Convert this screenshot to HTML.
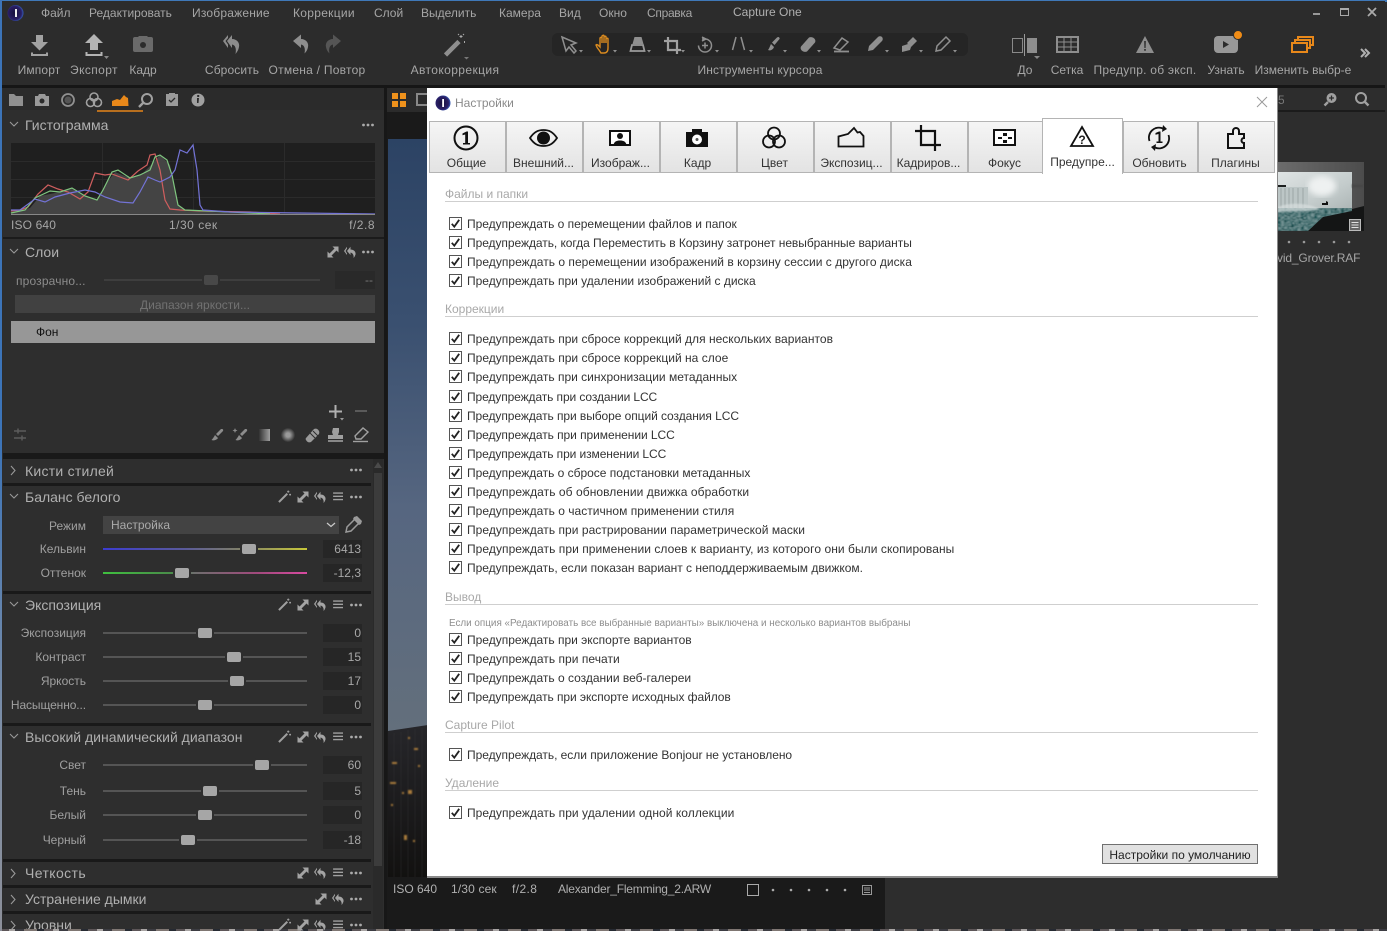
<!DOCTYPE html>
<html lang="ru"><head><meta charset="utf-8"><title>Capture One</title>
<style>
*{box-sizing:border-box}
html,body{margin:0;padding:0;width:1387px;height:931px;overflow:hidden;background:#2d2d2d}
body{position:relative;font:12px/16px "Liberation Sans","Noto Sans CJK SC",sans-serif;color:#a6a6a6}
.a{position:absolute}
.t{position:absolute;white-space:nowrap;line-height:16px;height:16px}
.c{transform:translateX(-50%)}
.h{position:absolute;white-space:nowrap;left:25px;font-size:14px;line-height:18px;height:18px;color:#b0b0b0}
.l{position:absolute;left:0;width:86px;text-align:right;white-space:nowrap;line-height:16px;height:16px;color:#a0a0a0}
.v{position:absolute;left:323px;width:39px;height:18px;background:#262626;text-align:right;padding-right:1px;line-height:18px;color:#a8a8a8}
.s{position:absolute;left:103px;width:204px;height:2px;background:#555}
.k{position:absolute;width:14px;height:10px;background:#a6a6a6;border-radius:2px;box-shadow:0 0 0 2px #2e2e2e}
.b{position:absolute;left:3px;width:368px;height:3px;background:#191919}
#dlg{position:absolute;left:427px;top:88px;width:851px;height:790px;background:#fff;border-right:1px solid #8a8a8a;border-bottom:2px solid #8a8a8a;color:#333}
.tab{position:absolute;top:33px;height:52px;background:linear-gradient(#f5f5f5,#e3e3e3);border:1px solid #b4b4b4;text-align:center;font-size:12px;line-height:16px;padding:33px 2px 0 0;color:#333;white-space:nowrap}
.sec{position:absolute;left:18px;width:813px;border-bottom:1px solid #cfcfcf;color:#a8a8a8;line-height:14px;height:15px}
.r{position:absolute;left:22px;height:16px;line-height:16px;white-space:nowrap;color:#333;padding-left:18px}
.r svg{position:absolute;left:0;top:1px;width:13px;height:13px}
</style></head>
<body>
<svg width="0" height="0" style="position:absolute"><defs>
<symbol id="wand" viewBox="0 0 14 14" overflow="visible"><path d="M1 13L10 4" stroke="#a0a0a0" stroke-width="2.200" fill="none"/><path d="M11 .5v2.500M9.800 1.800h2.500M13 4v2M12 5h2" stroke="#a8a8a8" stroke-width="1" fill="none"/></symbol>
<symbol id="exp" viewBox="0 0 12 12" overflow="visible"><path d="M5.500 .5H11.500V6.500L9.500 4.500 4.500 9.500 6.500 11.500H.5V5.500L2.500 7.500 7.500 2.500z" fill="#a4a4a4"/></symbol>
<symbol id="und" viewBox="0 0 12 12" overflow="visible"><path d="M3 5L6.500 .8V3.500C10 3.500 12 6 11.500 8.500 11 10 10.500 11 9.500 12 10 9.500 9 7 6.500 6.500V9ZM0 5L3 .8V2.500L1.500 5 3 7.500V9Z" fill="#a4a4a4"/></symbol>
<symbol id="lst" viewBox="0 0 12 10" overflow="visible"><path d="M0 1.200h11M0 4.800h11M0 8.400h11" stroke="#a0a0a0" stroke-width="1.500"/></symbol>
<symbol id="dot" viewBox="0 0 12 4" overflow="visible"><circle cx="1.500" cy="2" r="1.400" fill="#aaa"/><circle cx="6" cy="2" r="1.400" fill="#aaa"/><circle cx="10.500" cy="2" r="1.400" fill="#aaa"/></symbol>
<symbol id="c" viewBox="0 0 13 13"><rect x=".5" y=".5" width="12" height="12" fill="#fff" stroke="#555"/><path d="M2.800 6.800L5.300 9.700 10.200 2.800" fill="none" stroke="#222" stroke-width="1.800"/></symbol>
<filter id="nz" x="0" y="0" width="1" height="1"><feTurbulence type="fractalNoise" baseFrequency=".3 .7" numOctaves="2" seed="4"/><feColorMatrix values="1.300 0 0 0 -.45  1.300 0 0 0 -.3  1.300 0 0 0 -.3  0 0 0 0 1"/><feGaussianBlur stdDeviation=".4"/></filter>
<filter id="bl"><feGaussianBlur stdDeviation="3"/></filter>
<filter id="bs"><feGaussianBlur stdDeviation=".7"/></filter>
</defs></svg>

<!-- frame -->
<div class="a" style="left:0;top:0;width:1387px;height:2px;background:#3f78b8"></div>
<div class="a" style="left:0;top:0;width:2px;height:931px;background:#3c74b8"></div>
<div class="a" style="left:2px;top:1px;width:1383px;height:85px;background:#2c2c2c"></div>
<div class="a" style="left:2px;top:85px;width:1383px;height:3px;background:#161616"></div>
<div class="a" style="left:552px;top:33px;width:416px;height:23px;background:#252525;border-radius:6px"></div>
<div class="a" style="left:3px;top:88px;width:381px;height:841px;background:#2e2e2e"></div>
<div class="a" style="left:3px;top:88px;width:381px;height:22px;background:#2b2b2b"></div>
<div class="a" style="left:97px;top:110px;width:46px;height:2px;background:#b86f1e"></div>
<div class="a" style="left:384px;top:88px;width:3px;height:841px;background:#171717"></div>
<div class="a" style="left:387px;top:88px;width:498px;height:24px;background:#2b2b2b"></div>
<div class="a" style="left:387px;top:112px;width:498px;height:817px;background:#1a1a1a"></div>
<div class="a" style="left:885px;top:88px;width:500px;height:841px;background:#2d2d2d"></div>
<div class="a" style="left:1277px;top:110px;width:108px;height:2px;background:#1b1b1b"></div>
<div class="a" style="left:388px;top:139px;width:40px;height:738px;background:linear-gradient(#2c4364 0,#3a5070 25%,#566680 50%,#636f7c 80%,#56626b 100%)"></div>
<div class="a" style="left:0;top:929px;width:1387px;height:2px;background:repeating-linear-gradient(90deg,#5d5658 0 9px,#a9a5a4 9px 15px,#3c3c42 15px 24px,#7f7672 24px 37px,#262a32 37px 44px)"></div>
<div class="a" style="left:0;top:440px;width:2px;height:491px;background:linear-gradient(#3c74b8,#7f8fa6 60%,#8c8f99)"></div>

<!-- building in viewer -->
<svg class="a" style="left:388px;top:725px" width="40" height="152">
<defs><linearGradient id="bg" x1="0" y1="0" x2="0" y2="1"><stop offset="0" stop-color="#26262a"/><stop offset="1" stop-color="#121110"/></linearGradient></defs>
<path d="M0 6L20 3 40 0V152H0z" fill="url(#bg)"/>
<path d="M6 8V152M13 7V152M20 5V152M27 4V152M34 3V152" stroke="#38383a" stroke-width="1" opacity=".3"/>
<g fill="#a87a3a" filter="url(#bs)"><rect x="20" y="12" width="2" height="2"/><rect x="26" y="23" width="4" height="2"/><rect x="4" y="37" width="5" height="2"/><rect x="2" y="57" width="6" height="2"/><rect x="20" y="65" width="4" height="4"/><rect x="14" y="67" width="2" height="2"/><rect x="3" y="79" width="2" height="2"/><rect x="16" y="110" width="3" height="5"/><rect x="25" y="115" width="2" height="2"/><rect x="30" y="40" width="2" height="2"/></g>
</svg>

<!-- thumbnail -->
<svg class="a" style="left:1278px;top:162px" width="86" height="69">
<defs><linearGradient id="fr" x1="0" y1="0" x2="1" y2="0"><stop offset="0" stop-color="#6c6c6c"/><stop offset="1" stop-color="#4c4c4c"/></linearGradient><linearGradient id="sk" x1="0" y1="0" x2="1" y2="1"><stop offset="0" stop-color="#dfe4e4"/><stop offset=".6" stop-color="#c4cccc"/><stop offset="1" stop-color="#aab3b3"/></linearGradient></defs>
<rect width="86" height="69" fill="url(#fr)"/>
<rect x="0" y="10" width="74" height="40" fill="url(#sk)"/>
<ellipse cx="44" cy="24" rx="14" ry="10" fill="#eef1f1" filter="url(#bl)"/>
<rect x="74" y="22" width="12" height="4" fill="#484848" filter="url(#bs)"/>
<rect x="0" y="25" width="30" height="22" fill="#bcc6c6"/>
<path d="M3 26v20M7 26v20M11 26v20M15 26v20M20 26v20M25 26v20" stroke="#8f9a9a" opacity=".7"/>
<path d="M0 23h8v2H0z" fill="#1c1f1f"/>
<rect x="0" y="46" width="74" height="23" filter="url(#nz)"/>
<rect x="0" y="46" width="74" height="23" fill="#163e42" opacity=".4"/>
<path d="M0 45C12 40 30 41 42 47 30 50 12 49 0 50z" fill="#d8dfdf" opacity=".7" filter="url(#bs)"/>
<path d="M45 55L74 49V47L86 44V69H30z" fill="#141515"/>
<path d="M44 41h4v-2l2 1v3h-6z" fill="#111"/>
<rect x="71.500" y="57.500" width="11" height="11" fill="#666" stroke="#bbb"/><path d="M73.500 60.500h7M73.500 63h7M73.500 65.500h7" stroke="#e0e0e0"/>
</svg>

<!-- menu -->
<span class="t" style="left:41px;top:5px">Файл</span>
<span class="t" style="left:89px;top:5px">Редактировать</span>
<span class="t" style="left:192px;top:5px;letter-spacing:.2px">Изображение</span>
<span class="t" style="left:293px;top:5px;letter-spacing:.3px">Коррекции</span>
<span class="t" style="left:374px;top:5px">Слой</span>
<span class="t" style="left:421px;top:5px">Выделить</span>
<span class="t" style="left:499px;top:5px">Камера</span>
<span class="t" style="left:559px;top:5px">Вид</span>
<span class="t" style="left:599px;top:5px">Окно</span>
<span class="t" style="left:647px;top:5px;letter-spacing:-.3px">Справка</span>
<span class="t" style="left:733px;top:4px;color:#b0b0b0">Capture One</span>

<!-- toolbar labels -->
<span class="t c" style="left:39px;top:62px;letter-spacing:.15px">Импорт</span>
<span class="t c" style="left:94px;top:62px;letter-spacing:.4px">Экспорт</span>
<span class="t c" style="left:143px;top:62px">Кадр</span>
<span class="t c" style="left:232px;top:62px;letter-spacing:.1px">Сбросить</span>
<span class="t c" style="left:317px;top:62px;letter-spacing:.25px">Отмена / Повтор</span>
<span class="t c" style="left:455px;top:62px;letter-spacing:.4px">Автокоррекция</span>
<span class="t c" style="left:760px;top:62px;letter-spacing:.15px">Инструменты курсора</span>
<span class="t c" style="left:1025px;top:62px">До</span>
<span class="t c" style="left:1067px;top:62px">Сетка</span>
<span class="t c" style="left:1145px;top:62px;letter-spacing:.25px">Предупр. об эксп.</span>
<span class="t c" style="left:1226px;top:62px">Узнать</span>
<span class="t c" style="left:1303px;top:62px">Изменить выбр-е</span>

<!-- icons under dialog -->
<svg class="a" style="left:0;top:0" width="1387" height="931">
<defs><radialGradient id="lg" cx=".45" cy=".5" r=".6"><stop offset="0" stop-color="#16103a"/><stop offset=".7" stop-color="#2a1f66"/><stop offset="1" stop-color="#3a76d8"/></radialGradient></defs>
<circle cx="15.500" cy="13" r="8" fill="url(#lg)"/><path d="M15 9h2v8h-2z" fill="#eee"/>
<!-- import -->
<path d="M36 35h7v7h5l-8.500 8.500L31 42h5z" fill="#a2a2a2"/><path d="M32 52.500v2.500h15v-2.500" fill="none" stroke="#a2a2a2" stroke-width="2"/>
<!-- export -->
<path d="M94 34l9 9h-5v7h-8v-7h-5z" fill="#b4b4b4"/><path d="M86.500 52v3h15v-3" fill="none" stroke="#b4b4b4" stroke-width="2"/><path d="M104 56h5l-2.500 3z" fill="#888"/>
<!-- camera -->
<path d="M133 39a2 2 0 0 1 2-2h3l1-1h8l1 1h3a2 2 0 0 1 2 2v11a2 2 0 0 1-2 2h-16a2 2 0 0 1-2-2z" fill="#6a6a6a"/><circle cx="143" cy="45" r="3" fill="#2c2c2c"/>
<!-- reset -->
<path d="M227 41L232 35V39C237 39 240 43 239 47 238.500 50 237 52 235.500 54 236.500 49 235.500 45 232 44.500V48ZM223 41L228 35V38L225.500 41 228 44.500V48Z" fill="#8c8c8c"/>
<!-- undo / redo -->
<path d="M293 41L301 34.500V39C306 39 309 43 308 47 307.500 50 306 52 304.500 53.500 305.500 49 304.500 45 301 44.500V48Z" fill="#8e8e8e"/>
<path d="M341 41L333 34.500V39C328 39 325 43 326 47 326.500 50 328 52 329.500 53.500 328.500 49 329.500 45 333 44.500V48Z" fill="#555"/>
<!-- wand -->
<path d="M445.500 55L459 41.500" stroke="#8f8f8f" stroke-width="4.500"/><path d="M461 35v3M459.500 36.500h3M458 34l1 1M464 34l-1 1M464.500 41v2" stroke="#aaa" stroke-width="1"/><path d="M464 57h5l-2.500 2.500z" fill="#777"/>
<!-- cursor tools -->
<g fill="none" stroke="#8f8f8f" stroke-width="1.800">
<path d="M562 37l14 6-5 2 5 6-2 2-5-6-3 4z" stroke-width="1.500"/>
<path d="M599 50c-2-2-3-5-3-5 1-1 2 0 4 2v-9c1-1 2-1 2 0v5-7c1-1 2-1 2 0v7-6c1-1 2-1 2 0v6-4c1-1 2-1 2 0v9c0 4-2 5-4 5h-3z" stroke="#d98a1f" stroke-width="1.400"/>
<path d="M630.500 51l1.500-6h11l1.500 6z" stroke="#9a9a9a"/><path d="M632.500 44l2-7h7l2 7z" fill="#8f8f8f" stroke="none"/>
<path d="M668 37v13h13M664 41h13v13" stroke="#a0a0a0" stroke-width="2.200"/>
<path d="M702 37l4 2-4 2M702 39h3a6.500 6.500 0 1 1-6.500 6.500M705 42.500v6M702 45.500h6" stroke-width="1.500"/>
<path d="M736 37l-3.500 13M741 37l3.500 13" stroke-width="1.500"/>
</g>
<g fill="#8f8f8f">
<path d="M778 37c1 0 2 1 1.500 2l-5 6-2.500-2.500 5-5z"/><path d="M771 44l3 3c-1 3-4 4-6 3 1-1 2-4 3-6z"/>
<path d="M801 47l8-9c2-1 5 0 6 2 .5 1 .5 2 0 3l-8 9c-2 1-5 0-6-2-.5-1-.5-2 0-3z" transform="translate(0,-.5)"/>
<path d="M834 48l8-10 6 4-8 8z" fill="none" stroke="#8f8f8f" stroke-width="1.500"/><path d="M834 51.500h15" stroke="#8f8f8f" stroke-width="1.800"/>
<path d="M868 51l1-5 9-9c1-1 3-1 4 0s1 3 0 4l-9 9z"/>
<path d="M902 46l6-2 3 3-1 3-8 2zM907 43l6-6 4 4-6 6z"/>
<path d="M936 51l1-5 9-9 4 4-9 9z" fill="none" stroke="#8f8f8f" stroke-width="1.500"/>
</g>
<g fill="#8f8f8f"><path d="M579 50h4l-2 2.500zM613 50h4l-2 2.500zM647 50h4l-2 2.500zM681 50h4l-2 2.500zM715 50h4l-2 2.500zM749 50h4l-2 2.500zM783 50h4l-2 2.500zM817 50h4l-2 2.500zM885 50h4l-2 2.500zM919 50h4l-2 2.500zM953 50h4l-2 2.500z"/></g>
<!-- before -->
<rect x="1012.500" y="38.500" width="10" height="14" fill="none" stroke="#8a8a8a"/><path d="M1024.500 34v22" stroke="#999"/><rect x="1027" y="38" width="10" height="15" fill="#8e8e8e"/><path d="M1034 56h6l-3 3z" fill="#888"/>
<!-- grid -->
<rect x="1057" y="37" width="21" height="15" fill="none" stroke="#8e8e8e" stroke-width="2"/><path d="M1058 42h19M1058 47h19M1064 38v13M1071 38v13" stroke="#8e8e8e"/>
<!-- warn -->
<path d="M1145 36l9 17h-18z" fill="#8e8e8e"/><path d="M1144.200 41h1.600l-.2 7h-1.200zM1144.200 49h1.600v1.800h-1.600z" fill="#2c2c2c"/>
<!-- learn -->
<rect x="1214" y="36" width="24" height="17" rx="4" fill="#989898"/><path d="M1223 41l6 3.500-6 3.500z" fill="#2c2c2c"/><circle cx="1238" cy="35" r="4.500" fill="#f08c16" stroke="#2c2c2c"/>
<!-- edit sel -->
<g fill="none" stroke="#e8881a" stroke-width="2"><rect x="1292" y="43" width="15" height="9"/><path d="M1295 43v-3h15v8h-3M1298 40v-3h15v8h-3"/></g>
<path d="M1361 49l4 4-4 4M1365 49l4 4-4 4" fill="none" stroke="#b0b0b0" stroke-width="2"/>
<!-- win controls -->
<path d="M1313 14h7" stroke="#999" stroke-width="2"/><rect x="1340.500" y="8.500" width="8" height="7" fill="none" stroke="#aaa"/><path d="M1340 9h9" stroke="#aaa" stroke-width="2"/><path d="M1368 8l8 8M1376 8l-8 8" stroke="#aaa" stroke-width="1.800"/>
<!-- side tabs -->
<path d="M9 94h5l2 2h7v10H9z" fill="#909090"/>
<path d="M35 96h3l1-2h6l1 2h3v10H35z" fill="#9a9a9a"/><circle cx="42" cy="101" r="2.500" fill="#2b2b2b"/>
<circle cx="68" cy="100" r="6" fill="none" stroke="#909090" stroke-width="1.800"/><circle cx="68" cy="100" r="3.500" fill="#555"/>
<g fill="none" stroke="#a0a0a0" stroke-width="1.600"><circle cx="94" cy="97" r="4"/><circle cx="90.500" cy="102.500" r="4"/><circle cx="97.500" cy="102.500" r="4"/></g>
<path d="M112 106v-5l5-2 3 1 4-5 2 2 2 1 .5 8z" fill="#e8881a"/>
<circle cx="147" cy="99" r="5" fill="none" stroke="#a0a0a0" stroke-width="2"/><path d="M143 103l-4 4" stroke="#a0a0a0" stroke-width="2.400"/>
<path d="M166 94h3v-1h6v1h3v12h-12z" fill="#9a9a9a"/><path d="M169 100l2 2 4-4" fill="none" stroke="#2b2b2b" stroke-width="1.300"/>
<circle cx="198" cy="100" r="6.500" fill="#a0a0a0"/><path d="M197 98h2l-.5 5h-1.500zM197.200 95h2v2h-2z" fill="#2b2b2b"/>
<!-- viewer top -->
<g fill="#f0921c"><rect x="392" y="93" width="6" height="6"/><rect x="400" y="93" width="6" height="6"/><rect x="392" y="101" width="6" height="6"/><rect x="400" y="101" width="6" height="6"/></g>
<rect x="417" y="94" width="12" height="11" fill="none" stroke="#888" stroke-width="2"/>
<circle cx="1331.500" cy="98" r="5" fill="#a0a0a0"/><path d="M1329 98h5M1331.500 95.500v5" stroke="#2c2c2c" stroke-width="1.300"/><path d="M1328 102l-3.500 3.500" stroke="#a0a0a0" stroke-width="2.400"/>
<circle cx="1361" cy="98" r="5" fill="none" stroke="#a0a0a0" stroke-width="2"/><path d="M1365 102l3.500 3.500" stroke="#a0a0a0" stroke-width="2.400"/>
<!-- hist -->
<rect x="11" y="143" width="364" height="72" fill="#1f1f1f"/>
<path d="M11 161.500h364M11 179.500h364M11 197.500h364M102.500 143v72M193.500 143v72M284.500 143v72" stroke="#2b2b2b"/>
<path d="M11 214V212L30 208 40 196 55 193 72 189 85 196 97 200 105 185 115 172 130 178 143 173 150 166 160 155 170 165 178 205 185 211 240 213 375 214z" fill="#444"/>
<g fill="none" stroke-width="1.200">
<path d="M11 211L20 210 28 207 38 194 48 185 58 189 68 192 80 199 88 192 95 173 105 175 112 174 120 177 128 180 138 171 147 165 150 155 155 154 160 170 165 200 170 209 180 210 200 211 250 212 280 214" stroke="#cf5e5e"/>
<path d="M11 213L25 210 35 198 50 191 60 192 72 188 85 196 97 200 103 190 112 172 118 170 130 178 140 175 150 170 155 157 160 155 167 160 172 175 178 205 185 210 230 212 270 214" stroke="#7fc57f"/>
<path d="M11 210L20 210 35 199 45 202 55 197 70 193 85 190 95 192 105 197 120 202 133 203 140 192 148 177 155 180 160 182 170 177 175 170 180 150 187 153 193 145 197 170 200 205 203 210 230 212 375 214" stroke="#7373d6"/>
</g>
<path d="M11 214.500H375" stroke="#888"/>
<!-- header glyphs -->
<g fill="none" stroke="#999" stroke-width="1.100">
<path d="M10 122l4 4 4-4M10 249l4 4 4-4M10 494l4 4 4-4M10 602l4 4 4-4M10 734l4 4 4-4M11 466l4 4.500-4 4.500M11 869l4 4.500-4 4.500M11 895l4 4.500-4 4.500M11 921l4 4.500-4 4.500"/>
</g>
<use href="#dot" x="362" y="123" width="12" height="4"/>
<use href="#exp" x="327" y="246" width="12" height="12"/><use href="#und" x="344" y="246" width="12" height="12"/><use href="#dot" x="362" y="250" width="12" height="4"/>
<use href="#dot" x="350" y="468" width="12" height="4"/>
<use href="#wand" x="278" y="490" width="13" height="13"/><use href="#exp" x="297" y="491" width="12" height="12"/><use href="#und" x="314" y="491" width="12" height="12"/><use href="#lst" x="333" y="492" width="11" height="9"/><use href="#dot" x="350" y="495" width="12" height="4"/>
<use href="#wand" x="278" y="598" width="13" height="13"/><use href="#exp" x="297" y="599" width="12" height="12"/><use href="#und" x="314" y="599" width="12" height="12"/><use href="#lst" x="333" y="600" width="11" height="9"/><use href="#dot" x="350" y="603" width="12" height="4"/>
<use href="#wand" x="278" y="730" width="13" height="13"/><use href="#exp" x="297" y="731" width="12" height="12"/><use href="#und" x="314" y="731" width="12" height="12"/><use href="#lst" x="333" y="732" width="11" height="9"/><use href="#dot" x="350" y="735" width="12" height="4"/>
<use href="#exp" x="297" y="867" width="12" height="12"/><use href="#und" x="314" y="867" width="12" height="12"/><use href="#lst" x="333" y="868" width="11" height="9"/><use href="#dot" x="350" y="871" width="12" height="4"/>
<use href="#exp" x="315" y="893" width="12" height="12"/><use href="#und" x="332" y="893" width="12" height="12"/><use href="#dot" x="350" y="897" width="12" height="4"/>
<use href="#wand" x="278" y="918" width="13" height="13"/><use href="#exp" x="297" y="919" width="12" height="12"/><use href="#und" x="314" y="919" width="12" height="12"/><use href="#lst" x="333" y="920" width="11" height="9"/><use href="#dot" x="350" y="923" width="12" height="4"/>
<!-- layers tools -->
<path d="M329 411.500h13M335.500 405v13" stroke="#b0b0b0" stroke-width="2"/><path d="M340 418h4l-2 2.500z" fill="#999"/><path d="M355 411h12" stroke="#5a5a5a" stroke-width="2"/>
<path d="M14 431h12M14 438h12" stroke="#5c5c5c" stroke-width="1.500"/><path d="M18 428.500v5M22 435.500v5" stroke="#5c5c5c" stroke-width="1.500"/>
<g fill="#8c8c8c"><path d="M222 429c1 0 1.500 1 1 2l-5 5-2-2 5-5zM215 435l3 3c-1 2-5 3-6.500 2 1-1 2.500-3 3.500-5z"/>
<path d="M246 429c1 0 1.500 1 1 2l-5 5-2-2 5-5zM239 435l3 3c-1 2-5 3-6.500 2 1-1 2.500-3 3.500-5zM235 428l.7 1.800 1.800.7-1.800.7-.7 1.800-.7-1.800-1.800-.7 1.800-.7z"/></g>
<defs><linearGradient id="gg"><stop offset="0" stop-color="#333"/><stop offset="1" stop-color="#a0a0a0"/></linearGradient><radialGradient id="rg"><stop offset=".3" stop-color="#9a9a9a"/><stop offset="1" stop-color="#333"/></radialGradient></defs>
<rect x="259" y="429" width="11" height="12" fill="url(#gg)"/><circle cx="288" cy="435" r="7" fill="url(#rg)"/>
<path d="M306 438l8-9c2-1 4 0 5 2 .5 1 .3 2 0 3l-8 8c-2 1-4 0-5-2-.5-.5-.5-1.500 0-2z" fill="#9a9a9a"/><path d="M310 433l5 5M313 431l5 5" stroke="#2e2e2e"/>
<path d="M333 428h6v4l-1 3h5v4h-15v-4h5l-1-3z" fill="#a0a0a0"/><path d="M328 441h15" stroke="#a0a0a0" stroke-width="1.600"/>
<path d="M355 436l8-8 5 4-7 7h-5z" fill="none" stroke="#a0a0a0" stroke-width="1.400"/><path d="M353 441.500h15" stroke="#a0a0a0" stroke-width="1.400"/>
<!-- WB pipette -->
<path d="M346 532l1-5 8-8 4 4-8 8z" fill="none" stroke="#9a9a9a" stroke-width="1.500"/><path d="M354 517l3-1 5 5-1 3-2 1-6-6z" fill="#9a9a9a"/>
<!-- status icons -->
<rect x="747.500" y="884.500" width="11" height="11" fill="none" stroke="#aaa"/>
<g fill="#aaa"><circle cx="773" cy="890" r="1.300"/><circle cx="791" cy="890" r="1.300"/><circle cx="809" cy="890" r="1.300"/><circle cx="827" cy="890" r="1.300"/><circle cx="845" cy="890" r="1.300"/></g>
<rect x="862.500" y="885.500" width="9" height="9" fill="none" stroke="#999"/><path d="M864 888h6M864 890h6M864 892.500h6" stroke="#999"/>
<g fill="#999"><circle cx="1289" cy="242" r="1.300"/><circle cx="1304" cy="242" r="1.300"/><circle cx="1319" cy="242" r="1.300"/><circle cx="1334" cy="242" r="1.300"/><circle cx="1349" cy="242" r="1.300"/></g>
</svg>

<!-- hist labels -->
<span class="t" style="left:11px;top:217px;letter-spacing:.15px">ISO 640</span>
<span class="t" style="left:169px;top:217px;letter-spacing:.5px">1/30 сек</span>
<span class="t" style="right:1012px;top:217px;letter-spacing:.5px">f/2.8</span>

<!-- section separators -->
<div class="a" style="left:3px;top:237px;width:381px;height:2px;background:#1b1b1b"></div>
<div class="a" style="left:3px;top:453px;width:381px;height:6px;background:#191919"></div>
<div class="b" style="top:483px"></div>
<div class="b" style="top:591px"></div>
<div class="b" style="top:723px"></div>
<div class="b" style="top:859px"></div>
<div class="b" style="top:885px"></div>
<div class="b" style="top:911px"></div>
<div class="a" style="left:373px;top:459px;width:10px;height:470px;background:#2a2a2a"></div>
<div class="a" style="left:374px;top:473px;width:8px;height:393px;background:#3c3c3c"></div>
<div class="a" style="left:374px;top:462px;width:0;height:0;border:4px solid transparent;border-bottom:6px solid #4a4a4a;border-top:0"></div>

<!-- headers -->
<span class="h" style="top:116px">Гистограмма</span>
<span class="h" style="top:243px">Слои</span>
<span class="h" style="top:462px;letter-spacing:.25px">Кисти стилей</span>
<span class="h" style="top:488px">Баланс белого</span>
<span class="h" style="top:596px">Экспозиция</span>
<span class="h" style="top:728px">Высокий динамический диапазон</span>
<span class="h" style="top:864px;letter-spacing:.4px">Четкость</span>
<span class="h" style="top:890px">Устранение дымки</span>
<span class="h" style="top:916px;height:13px;overflow:hidden">Уровни</span>

<!-- layers -->
<span class="t" style="left:16px;top:273px;color:#8c8c8c;letter-spacing:.15px">прозрачно...</span>
<div class="a" style="left:104px;top:279px;width:216px;height:2px;background:#3e3e3e"></div>
<div class="k" style="left:204px;top:275px;background:#484848"></div>
<div class="a" style="left:335px;top:271px;width:40px;height:18px;background:#292929;text-align:right;line-height:18px;color:#777;padding-right:2px">--</div>
<div class="a" style="left:15px;top:295px;width:360px;height:18px;background:#414141;text-align:center;line-height:20px;color:#727272">Диапазон яркости...</div>
<div class="a" style="left:11px;top:321px;width:364px;height:22px;background:#979797;color:#111;line-height:23px;padding-left:25px">Фон</div>

<!-- WB -->
<span class="l" style="top:518px">Режим</span>
<div class="a" style="left:103px;top:516px;width:236px;height:18px;background:#434343;line-height:19px;padding-left:8px;color:#aaa">Настройка</div>
<svg class="a" style="left:326px;top:522px" width="10" height="6"><path d="M1 1l4 3.500 4-3.500" fill="none" stroke="#ccc" stroke-width="1.200"/></svg>
<span class="l" style="top:541px">Кельвин</span>
<div class="s" style="top:548px;background:linear-gradient(90deg,#3c3cd0,#5a5a9a 40%,#7c7c6c 65%,#c8c83a)"></div>
<div class="k" style="left:242px;top:544px"></div><div class="v" style="top:540px">6413</div>
<span class="l" style="top:565px">Оттенок</span>
<div class="s" style="top:572px;background:linear-gradient(90deg,#3fc03f,#4a8a4a 35%,#6e6e6e 45%,#a04a7c 75%,#d84aa0)"></div>
<div class="k" style="left:175px;top:568px"></div><div class="v" style="top:564px">-12,3</div>

<!-- Exposure -->
<span class="l" style="top:625px">Экспозиция</span><div class="s" style="top:632px"></div><div class="k" style="left:198px;top:628px"></div><div class="v" style="top:624px">0</div>
<span class="l" style="top:649px">Контраст</span><div class="s" style="top:656px"></div><div class="k" style="left:227px;top:652px"></div><div class="v" style="top:648px">15</div>
<span class="l" style="top:673px">Яркость</span><div class="s" style="top:680px"></div><div class="k" style="left:230px;top:676px"></div><div class="v" style="top:672px">17</div>
<span class="l" style="top:697px;letter-spacing:-.1px">Насыщенно...</span><div class="s" style="top:704px"></div><div class="k" style="left:198px;top:700px"></div><div class="v" style="top:696px">0</div>

<!-- HDR -->
<span class="l" style="top:757px">Свет</span><div class="s" style="top:764px"></div><div class="k" style="left:255px;top:760px"></div><div class="v" style="top:756px">60</div>
<span class="l" style="top:783px">Тень</span><div class="s" style="top:790px"></div><div class="k" style="left:203px;top:786px"></div><div class="v" style="top:782px">5</div>
<span class="l" style="top:807px">Белый</span><div class="s" style="top:814px"></div><div class="k" style="left:198px;top:810px"></div><div class="v" style="top:806px">0</div>
<span class="l" style="top:832px">Черный</span><div class="s" style="top:839px"></div><div class="k" style="left:181px;top:835px"></div><div class="v" style="top:831px">-18</div>

<!-- viewer text -->
<span class="t" style="left:393px;top:881px;color:#b0b0b0">ISO 640</span>
<span class="t" style="left:451px;top:881px;color:#b0b0b0;letter-spacing:.15px">1/30 сек</span>
<span class="t" style="left:512px;top:881px;color:#b0b0b0;letter-spacing:.4px">f/2.8</span>
<span class="t" style="left:558px;top:881px;color:#b0b0b0;letter-spacing:-.2px">Alexander_Flemming_2.ARW</span>
<span class="t" style="left:1277px;top:250px;width:90px;overflow:hidden;letter-spacing:-.15px">vid_Grover.RAF</span>
<span class="t" style="left:1278px;top:92px;color:#777;width:6px;overflow:hidden">5</span>

<!-- dialog -->
<div id="dlg">
<svg class="a" style="left:8px;top:7px" width="16" height="16"><circle cx="8" cy="8" r="7.500" fill="url(#lg)"/><path d="M7.200 4h1.800v8H7.200z" fill="#fff"/></svg>
<span class="t" style="left:28px;top:7px;color:#8a8a8a">Настройки</span>
<svg class="a" style="left:829px;top:8px" width="12" height="12"><path d="M1 1l10 10M11 1L1 11" stroke="#9a9a9a"/></svg>

<div class="tab" style="left:2px;width:77px">Общие</div>
<div class="tab" style="left:79px;width:77px">Внешний...</div>
<div class="tab" style="left:156px;width:77px">Изображ...</div>
<div class="tab" style="left:233px;width:77px">Кадр</div>
<div class="tab" style="left:310px;width:77px">Цвет</div>
<div class="tab" style="left:387px;width:77px">Экспозиц...</div>
<div class="tab" style="left:464px;width:77px">Кадриров...</div>
<div class="tab" style="left:541px;width:75px">Фокус</div>
<div class="tab" style="left:696px;width:75px">Обновить</div>
<div class="tab" style="left:771px;width:77px">Плагины</div>
<div class="a" style="left:2px;top:84px;width:846px;height:1px;background:#b4b4b4"></div>
<div class="tab" style="left:615px;top:30px;width:81px;height:56px;background:#fff;border-bottom:0;padding-top:35px;padding-right:0">Предупре...</div>

<svg class="a" style="left:0;top:0" width="849" height="90">
<g transform="translate(-427,-88)">
<circle cx="466" cy="138" r="11.500" fill="none" stroke="#111" stroke-width="2"/><path d="M462.500 133.500l4-2h1.500v11.500h2v1.500h-7v-1.500h2.200v-8.500l-2.700 .8z" fill="#111"/>
<path d="M530 138c4-6 8-8 13.500-8s9.500 2 13.500 8c-4 6-8 8-13.500 8s-9.500-2-13.500-8z" fill="none" stroke="#111" stroke-width="1.800"/><circle cx="543.500" cy="138" r="6.500" fill="#111"/>
<rect x="610" y="131" width="20" height="14" fill="#fff" stroke="#111" stroke-width="2"/><circle cx="620" cy="136" r="3" fill="#111"/><path d="M613.500 144.500c1-3 3-4 6.500-4s5.500 1 6.500 4z" fill="#111"/>
<path d="M686 132h6v-3h10v3h6v15h-22z" fill="#111"/><circle cx="697" cy="139.500" r="5" fill="#fff"/><circle cx="697" cy="139.500" r="1.500" fill="#555"/>
<g fill="none" stroke="#111" stroke-width="1.800"><circle cx="774" cy="133.500" r="6"/><circle cx="769" cy="141.500" r="6"/><circle cx="779" cy="141.500" r="6"/></g>
<path d="M838.500 146.500V136.500L848 134 854 128 857.500 132.500 860 132 863.500 136V146.500Z" fill="none" stroke="#111" stroke-width="1.800"/>
<path d="M915 131H935V151M921 125V145H941" fill="none" stroke="#111" stroke-width="2.200"/>
<rect x="994" y="130" width="21" height="15" fill="#fff" stroke="#111" stroke-width="2"/><path d="M998 137h4v2h-4zM1008 137h4v2h-4zM1003 133h4v3h-4zM1003 140h4v3h-4z" fill="#111"/>
<path d="M1082 127l11 19h-22z" fill="none" stroke="#111" stroke-width="1.800"/><text x="1082" y="144" text-anchor="middle" font-size="12" font-weight="bold" fill="#222" font-family="Liberation Sans">?</text>
<path d="M1149.500 141A10 10 0 0 1 1163 128.500M1168.500 135A10 10 0 0 1 1155 147.500" fill="none" stroke="#111" stroke-width="1.800"/><path d="M1163 125l4 4-5 3zM1155 151l-4-4 5-3z" fill="#111"/><path d="M1155.500 133l3.500-1.500h1.500v10h2v1.500h-6v-1.500h2v-7.500l-3 .8z" fill="#111"/>
<path d="M1228 134h5v-3a3 3 0 0 1 6 0v3h5v4a2.500 2.500 0 0 0 0 5v5h-16z" fill="none" stroke="#111" stroke-width="2"/>
</g>
</svg>

<div class="sec" style="top:99px">Файлы и папки</div>
<div class="r" style="top:128px;letter-spacing:-.02px"><svg><use href="#c"/></svg>Предупреждать о перемещении файлов и папок</div>
<div class="r" style="top:147px;letter-spacing:-.055px"><svg><use href="#c"/></svg>Предупреждать, когда Переместить в Корзину затронет невыбранные варианты</div>
<div class="r" style="top:166px;letter-spacing:.03px"><svg><use href="#c"/></svg>Предупреждать о перемещении изображений в корзину сессии с другого диска</div>
<div class="r" style="top:185px"><svg><use href="#c"/></svg>Предупреждать при удалении изображений с диска</div>

<div class="sec" style="top:214px">Коррекции</div>
<div class="r" style="top:243px;letter-spacing:.02px"><svg><use href="#c"/></svg>Предупреждать при сбросе коррекций для нескольких вариантов</div>
<div class="r" style="top:262px;letter-spacing:.02px"><svg><use href="#c"/></svg>Предупреждать при сбросе коррекций на слое</div>
<div class="r" style="top:281px"><svg><use href="#c"/></svg>Предупреждать при синхронизации метаданных</div>
<div class="r" style="top:301px;letter-spacing:-.1px"><svg><use href="#c"/></svg>Предупреждать при создании LCC</div>
<div class="r" style="top:320px;letter-spacing:-.07px"><svg><use href="#c"/></svg>Предупреждать при выборе опций создания LCC</div>
<div class="r" style="top:339px;letter-spacing:-.06px"><svg><use href="#c"/></svg>Предупреждать при применении LCC</div>
<div class="r" style="top:358px;letter-spacing:-.09px"><svg><use href="#c"/></svg>Предупреждать при изменении LCC</div>
<div class="r" style="top:377px;letter-spacing:-.02px"><svg><use href="#c"/></svg>Предупреждать о сбросе подстановки метаданных</div>
<div class="r" style="top:396px;letter-spacing:.07px"><svg><use href="#c"/></svg>Предупреждать об обновлении движка обработки</div>
<div class="r" style="top:415px;letter-spacing:.02px"><svg><use href="#c"/></svg>Предупреждать о частичном применении стиля</div>
<div class="r" style="top:434px;letter-spacing:.04px"><svg><use href="#c"/></svg>Предупреждать при растрировании параметрической маски</div>
<div class="r" style="top:453px;letter-spacing:.06px"><svg><use href="#c"/></svg>Предупреждать при применении слоев к варианту, из которого они были скопированы</div>
<div class="r" style="top:472px;letter-spacing:-.02px"><svg><use href="#c"/></svg>Предупреждать, если показан вариант с неподдерживаемым движком.</div>

<div class="sec" style="top:502px">Вывод</div>
<span class="t" style="left:22px;top:528px;font-size:9.900px;color:#8e8e8e">Если опция «Редактировать все выбранные варианты» выключена и несколько вариантов выбраны</span>
<div class="r" style="top:544px"><svg><use href="#c"/></svg>Предупреждать при экспорте вариантов</div>
<div class="r" style="top:563px;letter-spacing:.04px"><svg><use href="#c"/></svg>Предупреждать при печати</div>
<div class="r" style="top:582px"><svg><use href="#c"/></svg>Предупреждать о создании веб-галереи</div>
<div class="r" style="top:601px;letter-spacing:-.07px"><svg><use href="#c"/></svg>Предупреждать при экспорте исходных файлов</div>

<div class="sec" style="top:630px">Capture Pilot</div>
<div class="r" style="top:659px;letter-spacing:-.04px"><svg><use href="#c"/></svg>Предупреждать, если приложение Bonjour не установлено</div>

<div class="sec" style="top:688px">Удаление</div>
<div class="r" style="top:717px;letter-spacing:.05px"><svg><use href="#c"/></svg>Предупреждать при удалении одной коллекции</div>

<div class="a" style="left:675px;top:756px;width:156px;height:20px;background:#e1e1e1;border:1px solid #707070;text-align:center;line-height:20px;color:#222;white-space:nowrap">Настройки по умолчанию</div>
</div>
</body></html>
